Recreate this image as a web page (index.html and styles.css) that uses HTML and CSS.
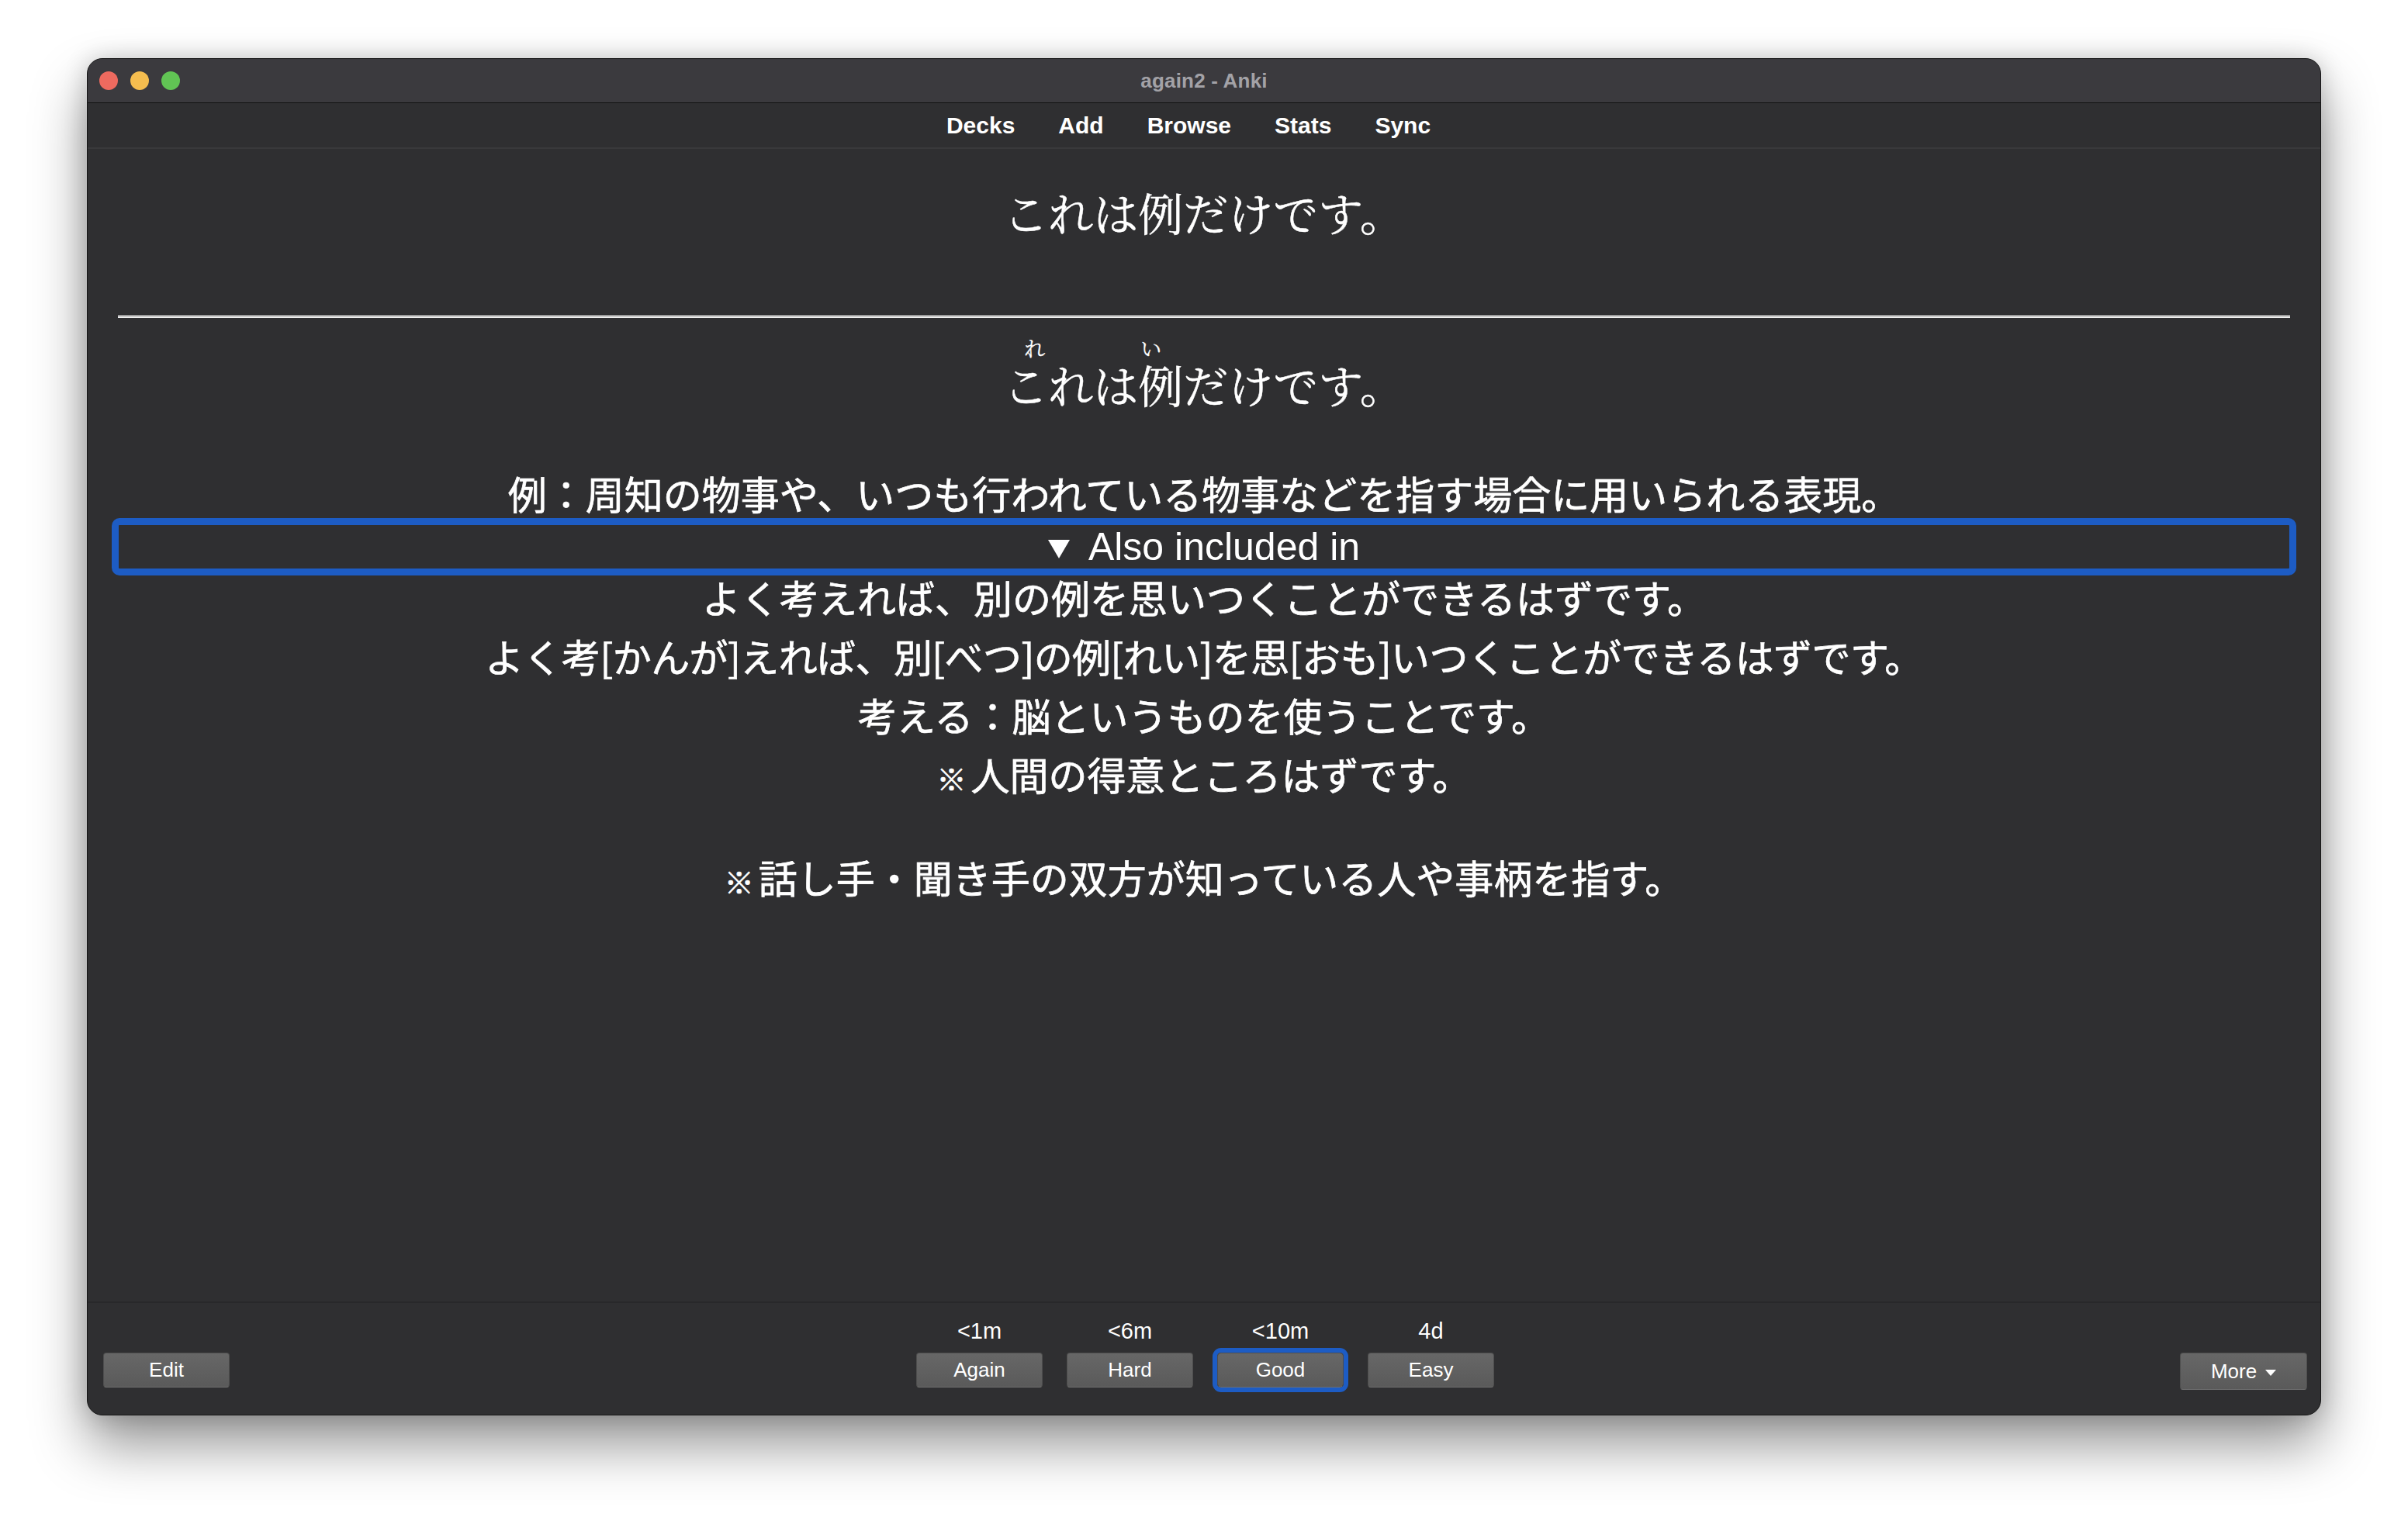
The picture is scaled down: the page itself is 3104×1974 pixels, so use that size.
FILE: index.html
```html
<!DOCTYPE html>
<html lang="ja">
<head>
<meta charset="utf-8">
<title>again2 - Anki</title>
<link rel="stylesheet" href="styles.css">
</head>
<body>
<div class="window">
  <header class="titlebar">
    <div class="lights">
      <span class="light red"></span>
      <span class="light yellow"></span>
      <span class="light green"></span>
    </div>
    <div class="title">again2 - Anki</div>
    <div class="spacer"></div>
  </header>
  <nav class="toolbar">
    <a class="tb-link">Decks</a>
    <a class="tb-link">Add</a>
    <a class="tb-link">Browse</a>
    <a class="tb-link">Stats</a>
    <a class="tb-link">Sync</a>
  </nav>
  <main class="card">
    <div class="front">これは例だけです。</div>
    <hr class="answer">
    <div class="furi"><span class="rb">これは例<span class="rt rt1">れ</span><span class="rt rt2">い</span></span>だけです。</div>
    <div class="jp def">例：周知の物事や、いつも行われている物事などを指す場合に用いられる表現。</div>
    <details class="included" open>
      <summary class="sum"><span class="tri"></span>Also included in</summary>
      <div class="jp">よく考えれば、別の例を思いつくことができるはずです。</div>
      <div class="jp tight">よく考[かんが]えれば、別[べつ]の例[れい]を思[おも]いつくことができるはずです。</div>
      <div class="jp">考える：脳というものを使うことです。</div>
      <div class="jp"><span class="kome">※</span>人間の得意ところはずです。</div>
    </details>
    <div class="jp note"><span class="kome">※</span>話し手・聞き手の双方が知っている人や事柄を指す。</div>
  </main>
  <footer class="bottombar">
    <div class="left">
      <button class="btn">Edit</button>
    </div>
    <div class="answers">
      <span class="ivl">&lt;1m</span>
      <span class="ivl">&lt;6m</span>
      <span class="ivl">&lt;10m</span>
      <span class="ivl">4d</span>
      <button class="btn">Again</button>
      <button class="btn">Hard</button>
      <button class="btn focus">Good</button>
      <button class="btn">Easy</button>
    </div>
    <div class="right">
      <button class="btn more">More<span class="caret"></span></button>
    </div>
  </footer>
</div>
</body>
</html>
```

FILE: styles.css
```css
* { box-sizing: border-box; }

html, body {
  margin: 0;
  padding: 0;
}

body {
  background: #ffffff;
  width: 3104px;
  height: 1974px;
  overflow: hidden;
  font-family: "Liberation Sans", Arial, sans-serif;
}

.window {
  width: 2880px;
  height: 1750px;
  margin: 75px auto 0;
  border: 1px solid #161616;
  border-radius: 20px;
  overflow: hidden;
  background: #2f2f31;
  display: flex;
  flex-direction: column;
  box-shadow: 0 38px 70px rgba(0, 0, 0, 0.42), 0 0 30px rgba(0, 0, 0, 0.18);
}

/* ---------- title bar ---------- */
.titlebar {
  height: 57px;
  flex: none;
  background: #3b3a3e;
  border-bottom: 1px solid #121212;
  display: grid;
  grid-template-columns: 1fr auto 1fr;
  align-items: center;
}

.lights {
  display: flex;
  gap: 16px;
  padding-left: 15px;
}

.light {
  width: 24px;
  height: 24px;
  border-radius: 50%;
  display: block;
}
.light.red { background: #ee6a5f; }
.light.yellow { background: #f5bd4f; }
.light.green { background: #61c454; }

.title {
  color: #a3a2a7;
  font-size: 26px;
  font-weight: bold;
  letter-spacing: 0.2px;
}

/* ---------- toolbar ---------- */
.toolbar {
  height: 59px;
  flex: none;
  border-bottom: 2px solid #39393b;
  display: flex;
  justify-content: center;
  align-items: center;
  gap: 56px;
  padding-right: 40px;
}

.tb-link {
  color: #ffffff;
  font-size: 30px;
  font-weight: bold;
  text-decoration: none;
}

/* ---------- card ---------- */
.card {
  flex: 1;
  padding: 41px 39px 0;
  color: #ffffff;
  text-align: center;
  overflow: hidden;
}

.front,
.furi {
  font-family: "Noto Serif CJK JP", "Noto Sans CJK JP", serif;
  font-size: 58px;
  line-height: 80px;
  height: 80px;
  -webkit-text-stroke: 0.5px #ffffff;
}

hr.answer {
  margin: 93px 0 0;
  height: 4px;
  border: none;
  border-top: 2px solid #9c9c9c;
  border-bottom: 2px solid #ededed;
}

.furi {
  margin-top: 45px;
}

.rb {
  position: relative;
}

.rt {
  position: absolute;
  top: -14px;
  font-size: 27px;
  line-height: 20px;
  width: 27px;
  -webkit-text-stroke: 0.3px #ffffff;
}
.rt1 { left: 27px; }
.rt2 { left: 177px; }

.jp {
  font-family: "Noto Sans CJK JP", "Noto Sans", sans-serif;
  font-size: 50px;
  line-height: 70px;
  height: 76px;
  padding-bottom: 6px;
  white-space: nowrap;
  -webkit-text-stroke: 0.7px #ffffff;
}

.jp.tight {
  letter-spacing: -0.6px;
}

.def {
  margin-top: 65px;
}

.included {
  display: block;
}

.sum {
  display: block;
  list-style: none;
  height: 58px;
  font-family: "Liberation Sans", Arial, sans-serif;
  font-size: 50px;
  line-height: 58px;
  outline: 9px solid #1d5cc4;
  outline-offset: -1px;
  border-radius: 2px;
}
.sum::-webkit-details-marker { display: none; }
.sum::marker { content: ""; }

.tri {
  display: inline-block;
  width: 0;
  height: 0;
  border-left: 14px solid transparent;
  border-right: 14px solid transparent;
  border-top: 24px solid #ffffff;
  margin-right: 24px;
  vertical-align: 2px;
}

.kome {
  font-size: 38px;
  font-weight: bold;
  margin-right: 6px;
}

.note {
  margin-top: 57px;
}

/* ---------- bottom bar ---------- */
.bottombar {
  height: 146px;
  flex: none;
  border-top: 2px solid #28282a;
  display: grid;
  grid-template-columns: 1fr auto 1fr;
  align-items: end;
  padding: 0 17px 35px 20px;
}

.left {
  display: flex;
  justify-content: flex-start;
}

.right {
  display: flex;
  justify-content: flex-end;
  margin-bottom: -3px;
}

.answers {
  display: grid;
  grid-template-columns: repeat(4, 163px);
  column-gap: 31px;
  row-gap: 13px;
  justify-items: center;
}

.ivl {
  color: #ffffff;
  font-size: 29px;
  line-height: 30px;
}

.btn {
  width: 163px;
  height: 45px;
  padding: 0;
  margin: 0;
  border: 1px solid #4e4e4e;
  border-bottom-color: #6e6e6e;
  border-radius: 4px;
  background: linear-gradient(#676767, #5a5a5a);
  color: #ffffff;
  font-family: "Liberation Sans", Arial, sans-serif;
  font-size: 26px;
  line-height: 43px;
  text-align: center;
}

.btn.focus {
  box-shadow: 0 0 0 6px #1d5cc4;
  border-radius: 5px;
}

.btn.more {
  width: 164px;
  height: 48px;
  display: flex;
  align-items: center;
  justify-content: center;
  gap: 11px;
}

.caret {
  width: 0;
  height: 0;
  border-left: 7px solid transparent;
  border-right: 7px solid transparent;
  border-top: 8px solid #ffffff;
  margin-top: 3px;
}
```
